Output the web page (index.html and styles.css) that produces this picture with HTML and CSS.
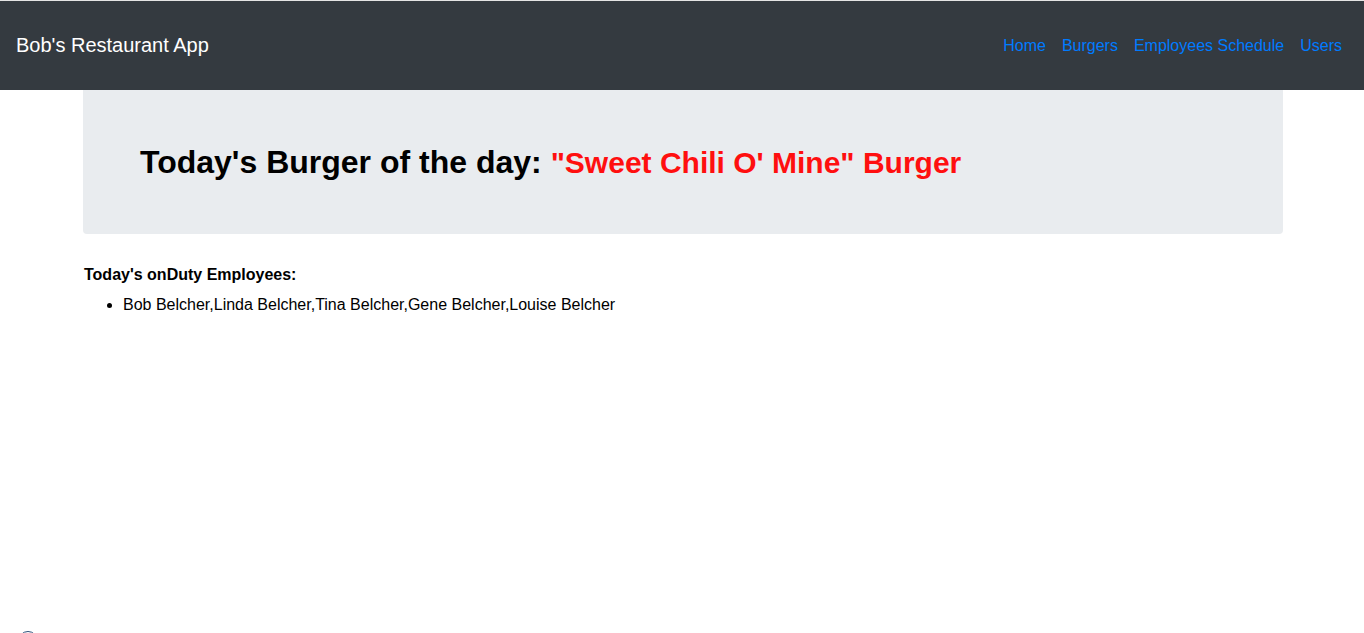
FILE: index.html
```html
<!DOCTYPE html>
<html>
<head>
<meta charset="utf-8">
<link rel="stylesheet" href="styles.css">
</head>
<body>
<nav class="navbar">
  <a class="brand" href="#">Bob's Restaurant App</a>
  <ul class="nav">
    <li><a href="#">Home</a></li>
    <li><a href="#">Burgers</a></li>
    <li><a href="#">Employees Schedule</a></li>
    <li><a href="#">Users</a></li>
  </ul>
</nav>
<main class="container">
  <section class="jumbotron">
    <h1 class="title">Today's Burger of the day: <span class="special">"Sweet Chili O' Mine" Burger</span></h1>
  </section>
  <section class="duty">
    <p class="duty-label">Today's onDuty Employees:</p>
    <ul class="duty-list">
      <li>Bob Belcher,Linda Belcher,Tina Belcher,Gene Belcher,Louise Belcher</li>
    </ul>
  </section>
</main>
<div class="widget"></div>
</body>
</html>
```
FILE: styles.css
```css
html, body {
  margin: 0;
  padding: 0;
}
body {
  font-family: "Liberation Sans", Arial, sans-serif;
  color: #000;
  background: #fff;
  border-top: 1px solid #e4e4e4;
}
.navbar {
  background: #343a40;
  height: 89px;
  display: flex;
  align-items: center;
  justify-content: space-between;
  padding: 0 16px;
}
.brand {
  color: #fff;
  font-size: 20px;
  text-decoration: none;
}
.nav {
  list-style: none;
  display: flex;
  margin: 0;
  padding: 0;
}
.nav a {
  display: block;
  padding: 0 8px;
  color: #007bff;
  font-size: 16px;
  text-decoration: none;
}
.nav li:first-child a {
  padding-left: 9px;
}
.nav li:last-child a {
  padding-right: 6px;
}
.container {
  width: 1200px;
  margin: 0 0 0 calc(50% - 599px);
}
.jumbotron {
  background: #e9ecef;
  border-radius: 0 0 4px 4px;
  height: 144px;
  padding: 0 57px;
  box-sizing: border-box;
  display: flex;
  align-items: center;
}
.title {
  margin: 0;
  font-size: 32px;
  font-weight: bold;
}
.special {
  color: #ff0f0f;
  font-size: 30px;
}
.duty {
  padding: 32px 1px 0;
}
.duty-label {
  margin: 0;
  font-size: 16px;
  font-weight: bold;
}
.duty-list {
  margin: 12px 0 0;
  padding-left: 39px;
  font-size: 16px;
}
.widget {
  position: fixed;
  left: 18px;
  bottom: -18px;
  width: 18px;
  height: 18px;
  border: 1px solid #2b4f7a;
  border-radius: 50%;
}
```
